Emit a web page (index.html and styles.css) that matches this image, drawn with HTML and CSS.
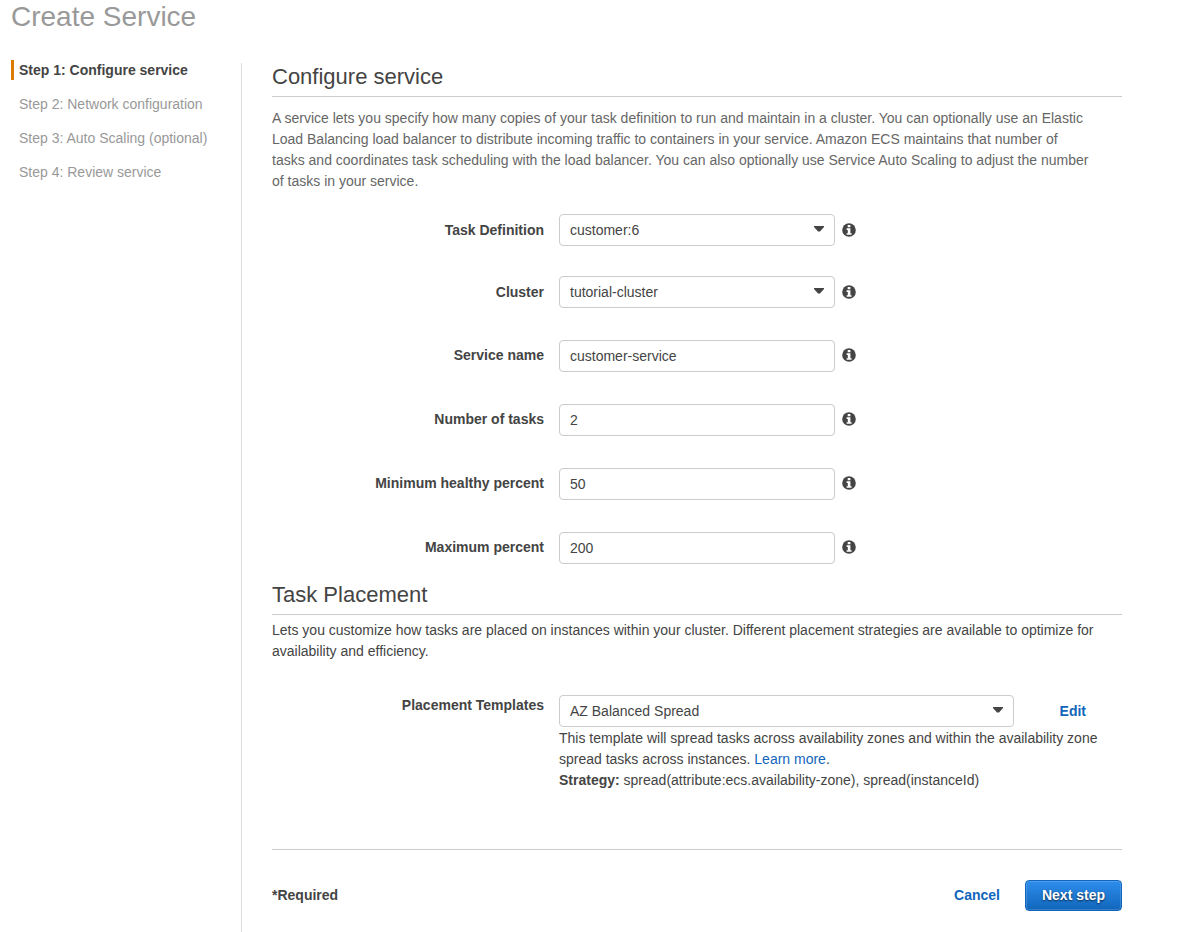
FILE: index.html
```html
<!DOCTYPE html>
<html lang="en">
<head>
<meta charset="utf-8">
<meta name="viewport" content="width=device-width, initial-scale=1">
<title>Create Service</title>
<link rel="stylesheet" href="styles.css">
</head>
<body>
<svg class="sprite" aria-hidden="true">
  <symbol id="info" viewBox="0 0 14 14">
    <circle cx="7" cy="7" r="6.8" fill="#444"/>
    <path d="M5.7 2h2.7v2.2H5.7zM4.6 5.3h3.8v4.9h1.2v1.6h-5v-1.6h1.2V6.9H4.6z" fill="#fff"/>
  </symbol>
  <symbol id="caret" viewBox="0 0 10 6">
    <path d="M0 0h10v1L6 5.6H4L0 1z" fill="#444"/>
  </symbol>
</svg>
<h1 class="page-title">Create Service</h1>
<div class="layout">
  <nav class="steps" aria-label="Steps">
    <ol class="step-list">
      <li class="step step-current" aria-current="step">Step 1: Configure service</li>
      <li class="step">Step 2: Network configuration</li>
      <li class="step">Step 3: Auto Scaling (optional)</li>
      <li class="step">Step 4: Review service</li>
    </ol>
  </nav>
  <main class="content">
    <form>
      <h2 class="section-title">Configure service</h2>
      <p class="intro">A service lets you specify how many copies of your task definition to run and maintain in a cluster. You can optionally use an Elastic Load Balancing load balancer to distribute incoming traffic to containers in your service. Amazon ECS maintains that number of tasks and coordinates task scheduling with the load balancer. You can also optionally use Service Auto Scaling to adjust the number of tasks in your service.</p>
      <div class="fields">
        <div class="choices">
          <div class="field">
            <label class="label" for="task-definition">Task Definition</label>
            <div class="control">
              <span class="select-wrap"><select class="input" id="task-definition"><option>customer:6</option></select><svg class="caret"><use href="#caret"/></svg></span>
              <svg class="info"><use href="#info"/></svg>
            </div>
          </div>
          <div class="field">
            <label class="label" for="cluster">Cluster</label>
            <div class="control">
              <span class="select-wrap"><select class="input" id="cluster"><option>tutorial-cluster</option></select><svg class="caret"><use href="#caret"/></svg></span>
              <svg class="info"><use href="#info"/></svg>
            </div>
          </div>
        </div>
        <div class="field">
          <label class="label" for="service-name">Service name</label>
          <div class="control">
            <input class="input" id="service-name" type="text" value="customer-service">
            <svg class="info"><use href="#info"/></svg>
          </div>
        </div>
        <div class="field">
          <label class="label" for="tasks">Number of tasks</label>
          <div class="control">
            <input class="input" id="tasks" type="text" value="2">
            <svg class="info"><use href="#info"/></svg>
          </div>
        </div>
        <div class="field">
          <label class="label" for="minimum">Minimum healthy percent</label>
          <div class="control">
            <input class="input" id="minimum" type="text" value="50">
            <svg class="info"><use href="#info"/></svg>
          </div>
        </div>
        <div class="field">
          <label class="label" for="maximum">Maximum percent</label>
          <div class="control">
            <input class="input" id="maximum" type="text" value="200">
            <svg class="info"><use href="#info"/></svg>
          </div>
        </div>
      </div>
      <h2 class="section-title">Task Placement</h2>
      <p class="placement-text">Lets you customize how tasks are placed on instances within your cluster. Different placement strategies are available to optimize for availability and efficiency.</p>
      <div class="field field-top">
        <label class="label" for="template">Placement Templates</label>
        <div>
          <div class="template-row">
            <span class="select-wrap select-wide"><select class="input" id="template"><option>AZ Balanced Spread</option></select><svg class="caret"><use href="#caret"/></svg></span>
            <a class="link link-strong" href="#">Edit</a>
          </div>
          <p class="help">This template will spread tasks across availability zones and within the availability zone spread tasks across instances. <a class="link" href="#">Learn more</a>.</p>
          <p class="help"><strong>Strategy:</strong> spread(attribute:ecs.availability-zone), spread(instanceId)</p>
        </div>
      </div>
      <footer class="actions">
        <strong class="required">*Required</strong>
        <a class="link link-strong" href="#">Cancel</a>
        <button class="primary" type="button">Next step</button>
      </footer>
    </form>
  </main>
</div>
</body>
</html>
```
FILE: styles.css
```css
* {
  box-sizing: border-box;
}

body {
  margin: 0;
  display: flex;
  flex-direction: column;
  min-height: 100vh;
  background: #fff;
  color: #444;
  font: 14px/21px "Liberation Sans", Arial, sans-serif;
}

.sprite {
  display: none;
}

.page-title {
  margin: 0 0 30px;
  padding-left: 11px;
  color: #999;
  font-size: 28px;
  line-height: 33px;
  font-weight: 400;
}

.layout {
  flex: 1;
  display: grid;
  grid-template-columns: 241px 1fr;
}

.steps {
  margin-top: -3px;
  padding-left: 11px;
}

.step-list {
  display: grid;
  gap: 14px;
  margin: 0;
  padding: 0;
  list-style: none;
}

.step {
  padding-left: 8px;
  color: #999;
  line-height: 20px;
}

.step-current {
  padding-left: 5px;
  border-left: 3px solid #dd7a00;
  color: #444;
  font-weight: 700;
}

.content {
  padding: 0 73px 20px 30px;
  border-left: 1px solid #ddd;
}

.section-title {
  margin: 0;
  padding-bottom: 5px;
  border-bottom: 1px solid #ccc;
  font-size: 22px;
  line-height: 28px;
  font-weight: 400;
}

.intro {
  margin: 11px 0 22px;
  padding-right: 31px;
  color: #666;
}

.fields {
  display: grid;
  gap: 32px;
  margin-bottom: 17px;
}

.choices {
  display: grid;
  gap: 30px;
}

.field {
  display: grid;
  grid-template-columns: 32% 1fr;
  column-gap: 15px;
  align-items: center;
}

.fields > .field .label,
.fields > .field .info {
  margin-bottom: 2px;
}

.field-top {
  align-items: start;
}

.field-top .label {
  line-height: 20px;
}

.label {
  text-align: right;
  font-weight: 700;
}

.control {
  display: grid;
  grid-template-columns: minmax(0, 276px) 14px;
  gap: 7px;
  align-items: center;
}

.select-wrap {
  position: relative;
  display: block;
}

.input {
  display: block;
  width: 100%;
  height: 32px;
  padding: 0 10px;
  border: 1px solid #ccc;
  border-radius: 4px;
  background: #fff;
  color: #444;
  font: inherit;
  appearance: none;
}

.caret {
  position: absolute;
  top: 12px;
  right: 11px;
  width: 10px;
  height: 6px;
  pointer-events: none;
}

.info {
  width: 14px;
  height: 14px;
}

.placement-text {
  margin: 5px 0 33px;
}

.template-row {
  display: flex;
  align-items: center;
  gap: 46px;
  margin-bottom: 1px;
  padding-right: 36px;
}

.select-wide {
  flex: 1;
}

.help {
  margin: 0;
}

.link {
  color: #1166bb;
  text-decoration: none;
}

.link-strong {
  font-weight: 700;
}

.actions {
  display: flex;
  align-items: center;
  gap: 25px;
  margin-top: 58px;
  padding-top: 30px;
  border-top: 1px solid #ccc;
}

.required {
  margin-right: auto;
}

.primary {
  padding: 4px 16px;
  border: 1px solid #1166bb;
  border-radius: 4px;
  background: linear-gradient(#2e8ded, #1166bb);
  box-shadow: inset 0 0 0 1px rgba(255, 255, 255, 0.15);
  color: #fff;
  font: inherit;
  font-weight: 700;
  text-shadow: 0 1px 2px rgba(0, 0, 0, 0.7);
}
```
